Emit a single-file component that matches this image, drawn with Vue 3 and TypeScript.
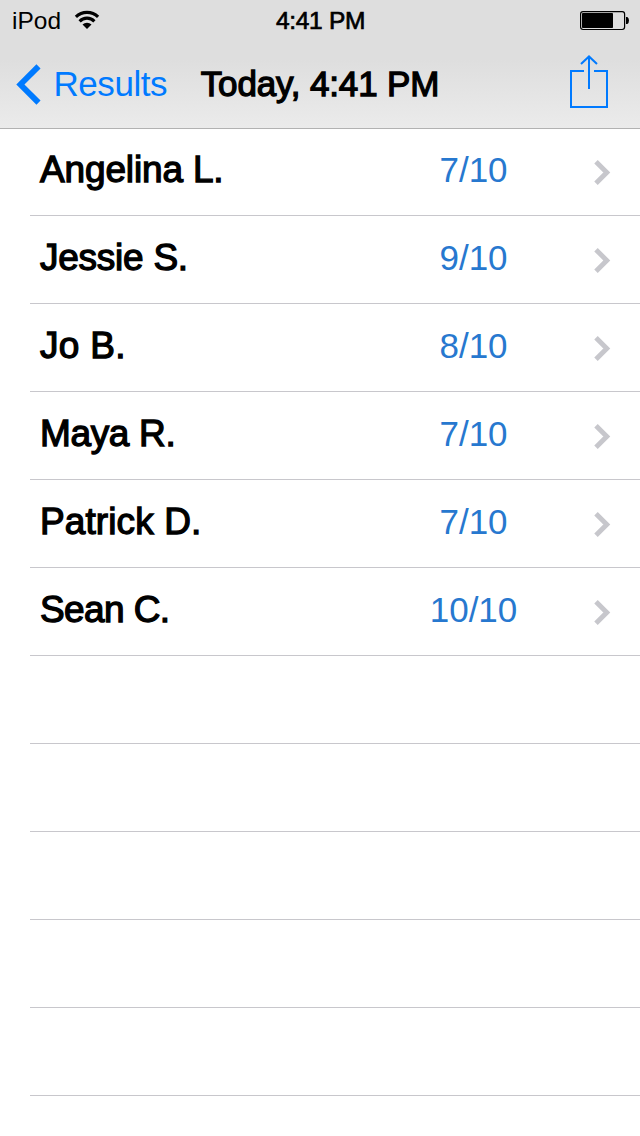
<script setup lang="ts">
interface Result {
  name: string
  score: string
  tracking: number
}

const results: Result[] = [
  { name: 'Angelina L.', score: '7/10', tracking: -0.15 },
  { name: 'Jessie S.', score: '9/10', tracking: -0.25 },
  { name: 'Jo B.', score: '8/10', tracking: 0.3 },
  { name: 'Maya R.', score: '7/10', tracking: -0.35 },
  { name: 'Patrick D.', score: '7/10', tracking: 0.1 },
  { name: 'Sean C.', score: '10/10', tracking: -0.6 },
]
const emptyRows = 6
</script>

<template>
  <main class="screen">
    <header class="header">
      <div class="status">
        <div class="carrier">
          <span>iPod</span>
          <svg class="wifi" width="26" height="20" viewBox="0 0 26 20">
            <path d="M1.9 6.9A15.8 15.8 0 0 1 24.1 6.9M5.6 11.3A10.3 10.3 0 0 1 20.4 11.3" fill="none" stroke="#000" stroke-width="3.1" />
            <path d="M13 18.9L8.5 14.6A6.4 6.4 0 0 1 17.5 14.6Z" fill="#000" />
          </svg>
        </div>
        <span class="clock">4:41 PM</span>
        <svg class="battery" width="50" height="20" viewBox="0 0 50 20">
          <rect x=".6" y=".6" width="44" height="17.9" rx="2.4" fill="none" stroke="#000" stroke-width="1.2" />
          <rect x="2" y="2" width="31" height="15" rx=".8" />
          <path d="M46 6h1.4q1.6 1 1.6 3.5t-1.6 3.5H46z" />
        </svg>
      </div>
      <nav class="nav">
        <button class="back" type="button">
          <svg width="26" height="42" viewBox="0 0 26 42">
            <path d="M22.5 2.4L4.4 20.5L22.5 38.6" fill="none" stroke="#007aff" stroke-width="5.8" />
          </svg>
          <span>Results</span>
        </button>
        <h1 class="title">Today, 4:41 PM</h1>
        <button class="share" type="button" aria-label="Share">
          <svg width="40" height="54" viewBox="0 0 40 54" fill="none" stroke="#007aff" stroke-width="2">
            <path d="M14 16H1V52H37V16H24M19 34V2M11 9L19 1.4L27 9" />
          </svg>
        </button>
      </nav>
    </header>
    <ul class="list">
      <li v-for="r in results" :key="r.name" class="row">
        <span class="name" :style="{ letterSpacing: r.tracking + 'px' }">{{ r.name }}</span>
        <span class="score">{{ r.score }}</span>
        <svg class="chevron" width="18" height="28" viewBox="0 0 18 28">
          <path d="M3 2.7L13.8 13.5L3 24.3" fill="none" stroke="#c7c7cc" stroke-width="4.9" />
        </svg>
      </li>
      <li v-for="n in emptyRows" :key="n" class="row"></li>
    </ul>
  </main>
</template>

<style>
body {
  margin: 0;
  background: #fff;
}
</style>

<style scoped>
.screen {
  width: 640px;
  height: 1136px;
  overflow: hidden;
  background: #fff;
  color: #000;
  font-family: "Liberation Sans", Arial, sans-serif;
}
.header {
  box-sizing: border-box;
  height: 129px;
  border-bottom: 1px solid #b2b2b2;
  background: linear-gradient(#dedede 0, #dedede 60px, #ebebeb 128px);
}
.status {
  display: grid;
  grid-template-columns: 1fr auto 1fr;
  height: 40px;
  padding: 0 11px 0 12px;
  font-size: 24.5px;
  line-height: 41px;
}
.carrier {
  display: flex;
  gap: 12.5px;
}
.wifi {
  margin-top: 10px;
}
.clock {
  letter-spacing: -0.3px;
  -webkit-text-stroke: 0.7px #000;
}
.battery {
  justify-self: end;
  margin: 11px -1px 0 0;
}
.nav {
  display: grid;
  grid-template-columns: 1fr auto 1fr;
  height: 88px;
  font-size: 35px;
  line-height: 88px;
}
button {
  padding: 0;
  border: 0;
  background: none;
  font: inherit;
  color: #007aff;
}
.back {
  display: flex;
  padding-left: 16px;
  letter-spacing: -0.45px;
}
.back svg {
  flex: none;
  margin: 24px 11.5px 0 0;
}
.title {
  margin: 0;
  font-size: 35px;
  font-weight: 400;
  letter-spacing: -0.15px;
  -webkit-text-stroke: 1.3px #000;
}
.share {
  justify-self: end;
  display: flex;
  padding: 15px 30px 0 0;
}
.list {
  margin: -1px 0 0 30px;
  padding: 0;
  list-style: none;
}
.row {
  display: grid;
  grid-template-columns: 344px 140px 1fr;
  box-sizing: border-box;
  height: 88px;
  padding-left: 10px;
  border-bottom: 1px solid #c8c7cc;
}
.name {
  font-size: 37px;
  line-height: 84px;
  white-space: nowrap;
  -webkit-text-stroke: 1.3px #000;
}
.score {
  color: #2778cf;
  font-size: 35px;
  line-height: 84px;
  text-align: center;
  margin-left: 39.5px;
  width: 100px;
}
.chevron {
  justify-self: end;
  margin: 31px 29px 0 0;
}
</style>
